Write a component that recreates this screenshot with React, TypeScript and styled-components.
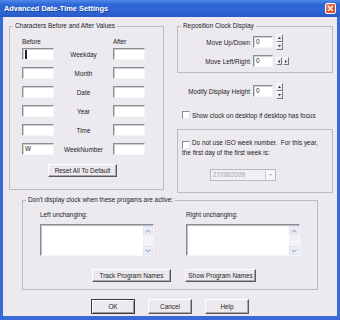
import React from 'react'
import styled, { createGlobalStyle } from 'styled-components'

const GlobalStyle = createGlobalStyle`
  html, body { margin: 0; padding: 0; }
  body {
    font-family: 'Liberation Sans', Arial, sans-serif;
    font-size: 6.4px;
    color: #232323;
  }
  * { box-sizing: border-box; }
`

const Window = styled.div`
  width: 340px;
  height: 320px;
  display: flex;
  flex-direction: column;
  background: #3a6ad8;
  overflow: hidden;
`

const TitleBar = styled.div`
  height: 17px;
  flex: none;
  display: flex;
  align-items: center;
  justify-content: space-between;
  padding: 0 4px;
  background: linear-gradient(to bottom, #5088ea 0%, #3068d8 25%, #2f64d5 70%, #285ac8 100%);
  color: #fff;
  font-size: 7.4px;
  font-weight: bold;
  text-shadow: 1px 1px 0 #1c3f96;
`

const CloseBox = styled.div`
  width: 11px;
  height: 11px;
  border: 1px solid #fff;
  border-radius: 2px;
  background: linear-gradient(135deg, #f08a5e 0%, #e0552c 55%, #c9421c 100%);
  display: flex;
  align-items: center;
  justify-content: center;
`

const Client = styled.div`
  flex: 1;
  margin: 0 3px 4px;
  background: #eceaef;
  display: flex;
  flex-direction: column;
  padding-top: 5px;
`

const TopRow = styled.div`
  display: flex;
  align-items: flex-start;
  gap: 13px;
  padding-left: 6px;
`

const Group = styled.fieldset<{ $w: number; $h: number }>`
  margin: 0;
  padding: 0;
  min-width: 0;
  width: ${p => p.$w}px;
  height: ${p => p.$h}px;
  border: 1px solid #bcbac0;
`

const Legend = styled.legend`
  margin-left: 3px;
  padding: 0 2px;
  line-height: 8px;
`

const LeftBody = styled.div`
  padding: 8px 0 0 12px;
`

const ValueGrid = styled.div<{ $gap: number }>`
  display: grid;
  grid-template-columns: 32px 59px 32px;
  row-gap: ${p => p.$gap}px;
  align-items: center;
`

const HeadText = styled.div`
  line-height: 8px;
  margin-bottom: 2px;
`

const RowLabel = styled.div`
  text-align: center;
  white-space: nowrap;
`

const Field = styled.div<{ $w?: number }>`
  width: ${p => (p.$w ? `${p.$w}px` : 'auto')};
  height: 12px;
  background: #fff;
  border: 1px solid;
  border-color: #8d8c92 #f6f6f6 #f6f6f6 #8d8c92;
  box-shadow: inset 1px 1px 0 #cfced3;
  display: flex;
  align-items: center;
  padding: 0 2px;
  line-height: 8px;
`

const Caret = styled.span`
  width: 2px;
  height: 9px;
  background: #1e2436;
`

const Button = styled.button<{ $w: number; $h?: number; $default?: boolean }>`
  width: ${p => p.$w}px;
  height: ${p => p.$h ?? 13}px;
  padding: 0;
  font-family: inherit;
  font-size: 6.4px;
  color: #232323;
  background: #eceaef;
  border: 1px solid;
  border-color: ${p => (p.$default ? '#3a3a3a' : '#ffffff #5a5a5a #5a5a5a #ffffff')};
  box-shadow: ${p =>
    p.$default ? 'inset 1px 1px 0 #fff, inset -1px -1px 0 #9a989e' : 'inset -1px -1px 0 #a9a7ad'};
  white-space: nowrap;
`

const ResetWrap = styled.div`
  margin: 9px 0 0 26px;
`

const RightCol = styled.div`
  width: 156px;
  display: flex;
  flex-direction: column;
`

const ReposBody = styled.div`
  padding-top: 4px;
  display: flex;
  flex-direction: column;
  gap: 3px;
`

const SpinRow = styled.div<{ $label: number; $top?: number }>`
  display: grid;
  grid-template-columns: ${p => p.$label}px 20px auto;
  column-gap: 3px;
  align-items: center;
  height: 16px;
  margin-top: ${p => p.$top ?? 0}px;
`

const SpinLabel = styled.div`
  text-align: right;
  white-space: nowrap;
`

const SpinStack = styled.div<{ $dir: 'column' | 'row' }>`
  display: flex;
  flex-direction: ${p => p.$dir};
  gap: ${p => (p.$dir === 'row' ? 1 : 0)}px;
  height: ${p => (p.$dir === 'row' ? 8 : 16)}px;
`

const SpinBtn = styled.div<{ $w: number }>`
  width: ${p => p.$w}px;
  height: 8px;
  background: #eceaef;
  border: 1px solid;
  border-color: #fff #7a7a7a #7a7a7a #fff;
  display: flex;
  align-items: center;
  justify-content: center;
`

const CheckRow = styled.div`
  margin-top: 12px;
  padding-left: 5px;
  display: flex;
  align-items: center;
  gap: 2px;
  height: 8px;
  white-space: nowrap;
`

const Check = styled.span`
  display: inline-block;
  width: 8px;
  height: 8px;
  flex: none;
  background: #fff;
  border: 1px solid;
  border-color: #8d8c92 #e6e5ea #e6e5ea #8d8c92;
`

const IsoGroup = styled(Group)`
  margin-top: 10px;
`

const IsoBody = styled.div`
  padding: 9px 0 0 4px;
`

const IsoText = styled.p`
  margin: 0;
  line-height: 8px;
  white-space: nowrap;

  ${Check} {
    vertical-align: -4px;
    margin-right: 2px;
  }
`

const Combo = styled.div`
  margin: 12px 0 0 28px;
  width: 66px;
  height: 12px;
  display: flex;
  border: 1px solid #b9b8be;
  background: #f1f0f3;
  color: #a3a2a8;
`

const ComboText = styled.div`
  flex: 1;
  padding-left: 2px;
  line-height: 10px;
`

const ComboBtn = styled.div`
  width: 10px;
  border-left: 1px solid #cfced4;
  background: #f6f5f8;
  display: flex;
  align-items: center;
  justify-content: center;
`

const BottomGroup = styled(Group)`
  margin: 3px 0 0 19px;
`

const BottomBody = styled.div`
  padding: 7px 0 0 17px;
`

const ListGrid = styled.div`
  display: grid;
  grid-template-columns: 114px 114px;
  column-gap: 32px;
`

const ListLabel = styled.div`
  line-height: 8px;
  margin-bottom: 5px;
  white-space: nowrap;
`

const ListBox = styled.div`
  height: 32px;
  background: #fff;
  border: 1px solid;
  border-color: #8d8c92 #f6f6f6 #f6f6f6 #8d8c92;
  box-shadow: inset 1px 1px 0 #bdbcc2;
  display: flex;
  justify-content: flex-end;
  padding: 1px 0 0 1px;
`

const ScrollBar = styled.div`
  width: 10px;
  background: #f3f2f8;
  display: flex;
  flex-direction: column;
  justify-content: space-between;
`

const ScrollBtn = styled.div`
  height: 9px;
  background: #eef0f9;
  border: 1px solid #dfe3f2;
  display: flex;
  align-items: center;
  justify-content: center;
`

const ProgButtons = styled.div`
  margin: 13px 0 0 52px;
  display: flex;
  gap: 14px;
`

const Footer = styled.div`
  margin-top: 9px;
  display: flex;
  justify-content: center;
  gap: 13px;
`

const Tri = ({ dir, color = '#333' }: { dir: 'up' | 'down' | 'left' | 'right'; color?: string }) => {
  const pts = {
    up: '0,2 1.5,0 3,2',
    down: '0,0 1.5,2 3,0',
    left: '2,0 0,1.5 2,3',
    right: '0,0 2,1.5 0,3',
  }[dir]
  const vertical = dir === 'up' || dir === 'down'
  return (
    <svg width={vertical ? 3 : 2} height={vertical ? 2 : 3} viewBox={vertical ? '0 0 3 2' : '0 0 2 3'}>
      <polygon points={pts} fill={color} />
    </svg>
  )
}

const Chevron = ({ up }: { up?: boolean }) => (
  <svg width="6" height="4" viewBox="0 0 6 4">
    <polyline
      points={up ? '0.5,3.5 3,1 5.5,3.5' : '0.5,0.5 3,3 5.5,0.5'}
      fill="none"
      stroke="#a9b4cf"
      strokeWidth="1.2"
    />
  </svg>
)

const rows = [
  { label: 'Weekday', before: 'caret' },
  { label: 'Month' },
  { label: 'Date' },
  { label: 'Year' },
  { label: 'Time' },
  { label: 'WeekNumber', before: 'W' },
]

const UpDown = () => (
  <SpinStack $dir="column">
    <SpinBtn $w={7}>
      <Tri dir="up" />
    </SpinBtn>
    <SpinBtn $w={7}>
      <Tri dir="down" />
    </SpinBtn>
  </SpinStack>
)

const List = () => (
  <ListBox>
    <ScrollBar>
      <ScrollBtn>
        <Chevron up />
      </ScrollBtn>
      <ScrollBtn>
        <Chevron />
      </ScrollBtn>
    </ScrollBar>
  </ListBox>
)

const App: React.FC = () => (
  <>
    <GlobalStyle />
    <Window>
      <TitleBar>
        <span>Advanced Date-Time Settings</span>
        <CloseBox>
          <svg width="7" height="7" viewBox="0 0 7 7">
            <path d="M1 1 L6 6 M6 1 L1 6" stroke="#fff" strokeWidth="1.4" />
          </svg>
        </CloseBox>
      </TitleBar>
      <Client>
        <TopRow>
          <Group $w={155} $h={168}>
            <Legend>Characters Before and After Values</Legend>
            <LeftBody>
              <ValueGrid $gap={0}>
                <HeadText>Before</HeadText>
                <div />
                <HeadText>After</HeadText>
              </ValueGrid>
              <ValueGrid $gap={7}>
                {rows.map(r => (
                  <React.Fragment key={r.label}>
                    <Field>{r.before === 'caret' ? <Caret /> : r.before}</Field>
                    <RowLabel>{r.label}</RowLabel>
                    <Field />
                  </React.Fragment>
                ))}
              </ValueGrid>
              <ResetWrap>
                <Button $w={69}>Reset All To Default</Button>
              </ResetWrap>
            </LeftBody>
          </Group>

          <RightCol>
            <Group $w={156} $h={51}>
              <Legend>Reposition Clock Display</Legend>
              <ReposBody>
                <SpinRow $label={72}>
                  <SpinLabel>Move Up/Down</SpinLabel>
                  <Field $w={20}>0</Field>
                  <UpDown />
                </SpinRow>
                <SpinRow $label={72}>
                  <SpinLabel>Move Left/Right</SpinLabel>
                  <Field $w={20}>0</Field>
                  <SpinStack $dir="row">
                    <SpinBtn $w={6}>
                      <Tri dir="left" />
                    </SpinBtn>
                    <SpinBtn $w={6}>
                      <Tri dir="right" />
                    </SpinBtn>
                  </SpinStack>
                </SpinRow>
              </ReposBody>
            </Group>

            <SpinRow $label={73} $top={10}>
              <SpinLabel>Modify Display Height</SpinLabel>
              <Field $w={20}>0</Field>
              <UpDown />
            </SpinRow>

            <CheckRow>
              <Check />
              <span>Show clock on desktop if desktop has focus</span>
            </CheckRow>

            <IsoGroup as="div" $w={156} $h={64}>
              <IsoBody>
                <IsoText>
                  <Check />
                  Do not use ISO week number.&nbsp; For this year,
                  <br />
                  the first day of the first week is:
                </IsoText>
                <Combo>
                  <ComboText>27/08/2009</ComboText>
                  <ComboBtn>
                    <Tri dir="down" color="#b0afb5" />
                  </ComboBtn>
                </Combo>
              </IsoBody>
            </IsoGroup>
          </RightCol>
        </TopRow>

        <BottomGroup $w={296} $h={94}>
          <Legend>Don't display clock when these progams are active:</Legend>
          <BottomBody>
            <ListGrid>
              <div>
                <ListLabel>Left unchanging:</ListLabel>
                <List />
              </div>
              <div>
                <ListLabel>Right unchanging:</ListLabel>
                <List />
              </div>
            </ListGrid>
            <ProgButtons>
              <Button $w={79}>Track Program Names</Button>
              <Button $w={71}>Show Program Names</Button>
            </ProgButtons>
          </BottomBody>
        </BottomGroup>

        <Footer>
          <Button $w={44} $h={15} $default>
            OK
          </Button>
          <Button $w={44} $h={15}>
            Cancel
          </Button>
          <Button $w={44} $h={15}>
            Help
          </Button>
        </Footer>
      </Client>
    </Window>
  </>
)

export default App
